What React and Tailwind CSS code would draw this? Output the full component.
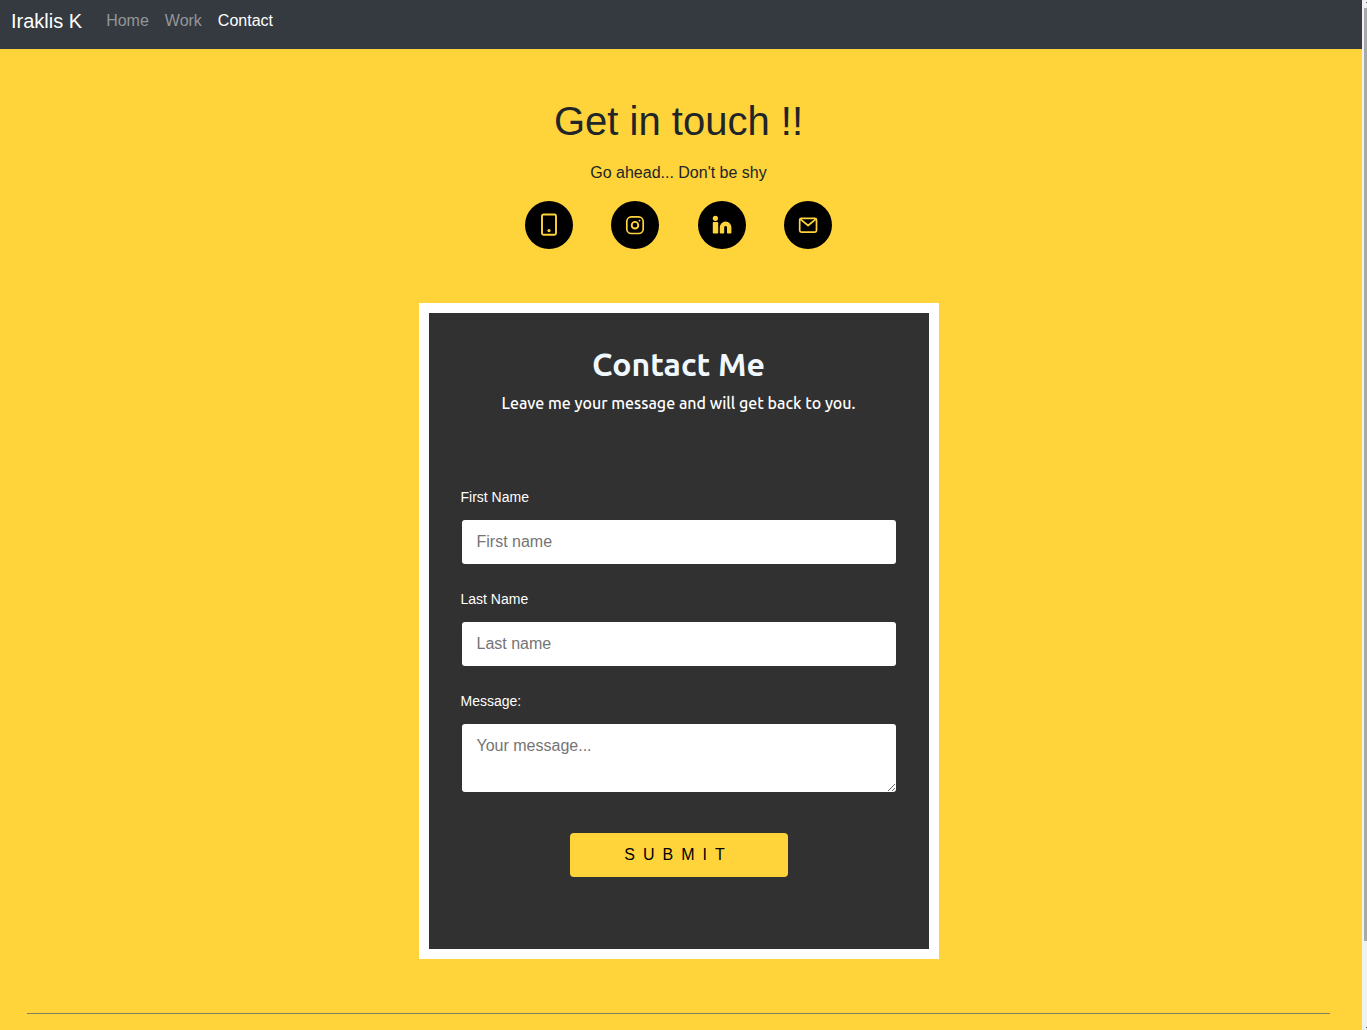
import React from "react";

const navLinks = [
  { label: "Home", color: "text-[#949699]" },
  { label: "Work", color: "text-[#949699]" },
  { label: "Contact", color: "text-white" },
];

function PhoneIcon() {
  return (
    <svg viewBox="0 0 24 24" className="size-6" fill="none" stroke="currentColor" strokeWidth="1.9" aria-hidden="true">
      <rect x="5" y="1.5" width="14" height="20.3" rx="1.5" />
      <circle cx="12" cy="17.6" r="1.6" fill="currentColor" stroke="none" />
    </svg>
  );
}

function InstagramIcon() {
  return (
    <svg viewBox="0 0 24 24" className="size-6" fill="none" stroke="currentColor" strokeWidth="1.7" aria-hidden="true">
      <rect x="3.8" y="3.9" width="16.4" height="16.6" rx="4.6" />
      <circle cx="12" cy="12.2" r="3.3" strokeWidth="1.9" />
      <circle cx="16.5" cy="7.6" r="0.9" fill="currentColor" stroke="none" />
    </svg>
  );
}

function LinkedinIcon() {
  return (
    <svg viewBox="0 0 24 24" className="size-6" fill="currentColor" aria-hidden="true">
      <circle cx="5.4" cy="5.3" r="2.6" />
      <path d="M2.8 9.8a.8.8 0 0 1 .8-.8h3.8a.8.8 0 0 1 .8.8v9.9a.8.8 0 0 1-.8.8H3.6a.8.8 0 0 1-.8-.8Z" />
      <path d="M9.8 14.3a5.8 5.8 0 0 1 11.6 0v5.4a.8.8 0 0 1-.8.8h-2.8a.8.8 0 0 1-.8-.8v-5.2a1.4 1.4 0 0 0-2.8 0v5.2a.8.8 0 0 1-.8.8h-2.8a.8.8 0 0 1-.8-.8Z" />
    </svg>
  );
}

function MailIcon() {
  return (
    <svg viewBox="0 0 24 24" className="size-6" fill="none" stroke="currentColor" strokeWidth="1.7" strokeLinejoin="round" aria-hidden="true">
      <rect x="3.7" y="5.3" width="16.8" height="13.8" rx="1.6" />
      <path d="m4.3 6.2 7.8 6.3 7.8-6.3" />
    </svg>
  );
}

const socials = [
  { label: "Phone", Icon: PhoneIcon },
  { label: "Instagram", Icon: InstagramIcon },
  { label: "LinkedIn", Icon: LinkedinIcon },
  { label: "Email", Icon: MailIcon },
];

const labelClass = "block pl-[2px] text-sm leading-5 text-white";
const fieldClass =
  "mx-[3px] block w-full rounded-[3px] bg-white px-[15px] py-2.5 text-base leading-6 text-gray-800 placeholder:text-[#757575] outline-none";

export default function App() {
  return (
    <div className="flex h-screen overflow-hidden bg-[#ffd43b] font-['Liberation_Sans',Arial,sans-serif] text-base text-[#212529]">
      <div className="min-w-0 flex-1">
        <nav className="flex h-[49px] items-start bg-[#343a40] px-[11px] pt-[6px]">
          <a href="#" className="mr-4 text-xl leading-[30px] text-white">Iraklis K</a>
          {navLinks.map((link) => (
            <a key={link.label} href="#" className={`px-2 pt-[3px] leading-6 ${link.color}`}>{link.label}</a>
          ))}
        </nav>

        <main className="pr-[5px] text-center">
          <h1 className="pt-12 text-[40px] leading-12">Get in touch !!</h1>
          <p className="mt-4 leading-6">Go ahead... Don't be shy</p>
          <div className="mx-auto mt-4 flex max-w-[307px] justify-between">
            {socials.map(({ label, Icon }) => (
              <a key={label} href="#" aria-label={label} className="flex size-12 items-center justify-center rounded-full bg-black text-[#ffd43b]">
                <Icon />
              </a>
            ))}
          </div>

          <section className="mx-auto mt-[54px] max-w-[520px] border-10 border-white bg-[#313131] px-[30px] pt-[31px] pb-[72px]">
            <h2 className="font-[Ubuntu,'Noto_Sans',sans-serif] text-[32px] leading-10 font-semibold text-[#f0f8ff]">Contact Me</h2>
            <p className="mt-[7px] font-[Ubuntu,'Noto_Sans',sans-serif] leading-6 font-medium text-white">Leave me your message and will get back to you.</p>
            <form className="mt-[72px] text-left" onSubmit={(e) => e.preventDefault()}>
              <label htmlFor="first" className={labelClass}>First Name</label>
              <div className="mt-[13px] flex"><input id="first" type="text" placeholder="First name" className={fieldClass} /></div>
              <label htmlFor="last" className={`${labelClass} mt-[25px]`}>Last Name</label>
              <div className="mt-[13px] flex"><input id="last" type="text" placeholder="Last name" className={fieldClass} /></div>
              <label htmlFor="message" className={`${labelClass} mt-[25px]`}>Message:</label>
              <div className="mt-[13px] flex"><textarea id="message" rows={2} placeholder="Your message..." className={`${fieldClass} resize`} /></div>
              <button type="submit" className="mx-auto mt-[41px] block h-11 w-[218px] rounded-[4px] bg-[#ffd43b] text-base tracking-[8px] text-black">SUBMIT</button>
            </form>
          </section>

          <hr className="mx-[27px] mt-[54px] border-t border-[#808066]" />
        </main>
      </div>

      <div className="flex w-[5px] flex-col items-end justify-between bg-[#f1f1f1] py-[2px]" aria-hidden="true">
        <div className="h-px w-px bg-[#505050]" />
        <div className="mt-[5px] mb-auto h-[933px] w-[3px] bg-[#a8a8a8]" />
        <div className="h-px w-px bg-[#505050]" />
      </div>
    </div>
  );
}
